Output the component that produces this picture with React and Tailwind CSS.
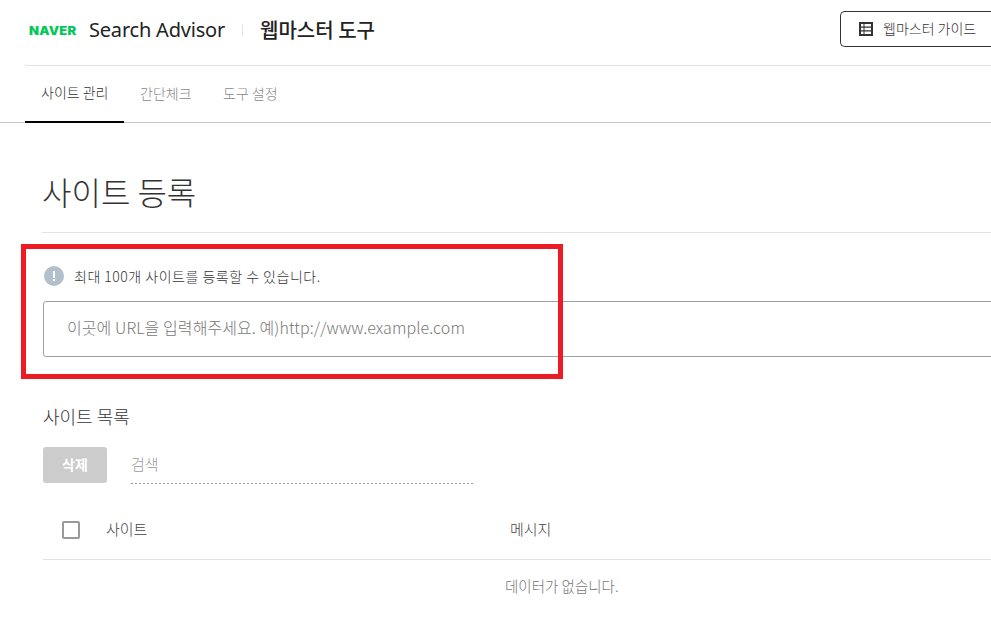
import { useState } from 'react'

const FONT = "font-['Noto_Sans_CJK_KR','Noto_Sans',sans-serif]"

const TABS = [
  { label: '사이트 관리', active: true, width: 'w-[99px]' },
  { label: '간단체크', active: false, width: 'w-[83px]' },
  { label: '도구 설정', active: false, width: 'w-[87px]' },
]

function GuideIcon() {
  return (
    <svg width="14" height="14" viewBox="0 0 14 14" className="shrink-0">
      <path fill="#333" fillRule="evenodd" d="M0 0h14v14H0zM2 2v2.5h2.5V2zm3.5 0v2.5H12V2zM2 5.75v2.5h2.5v-2.5zm3.5 0v2.5H12v-2.5zM2 9.5V12h2.5V9.5zm3.5 0V12H12V9.5z" />
    </svg>
  )
}

function InfoIcon() {
  return (
    <svg width="20" height="20" viewBox="0 0 20 20" className="shrink-0">
      <circle cx="10" cy="10" r="10" fill="#b1c0ca" />
      <rect x="9" y="5" width="2" height="7" fill="#fff" />
      <rect x="9" y="13" width="2" height="2" fill="#fff" />
    </svg>
  )
}

function Header() {
  return (
    <header className="ml-[25px] h-[66px] border-b border-[#e2e2e2] flex items-center pl-[4px] pb-[6px]">
      <span className="w-[48px] font-['Inter',sans-serif] font-black text-[11.5px] tracking-[0.2px] text-[#03c75a] mt-[4px] leading-none whitespace-nowrap origin-left scale-x-[1.13]">NAVER</span>
      <span className="ml-[12px] font-['Noto_Sans',sans-serif] text-[20px] tracking-[-0.2px] leading-none text-[#222]">Search Advisor</span>
      <span className="ml-[17px] w-px h-[12px] bg-[#e5e5e5]" />
      <span className={`ml-[17px] text-[20px] font-medium leading-none text-[#222] ${FONT}`}>웹마스터 도구</span>
      <button className="ml-auto mb-[2px] w-[151px] h-[36px] rounded-l-[5px] border border-r-0 border-[#333] flex items-center pl-[18px] gap-[10px] bg-white">
        <GuideIcon />
        <span className="text-[14px] font-light text-[#333] whitespace-nowrap">웹마스터 가이드</span>
      </button>
    </header>
  )
}

function Tabs() {
  return (
    <nav className="h-[57px] border-b border-[#c8c8c8] pl-[25px] flex">
      {TABS.map(tab => (
        <div
          key={tab.label}
          className={`${tab.width} h-[57px] flex items-center pl-[16px] pb-[3px] text-[14px] font-light ${tab.active ? 'text-[#333] border-b-2 border-black' : 'text-[#888]'}`}
        >
          {tab.label}
        </div>
      ))}
    </nav>
  )
}

export default function App() {
  const [url, setUrl] = useState('')
  const [query, setQuery] = useState('')

  return (
    <div className={`relative w-[991px] h-[631px] overflow-hidden bg-white ${FONT}`}>
      <Header />
      <Tabs />

      <main className="pl-[42px] w-[1100px]">
        <h1 className="h-[110px] border-b border-[#e2e2e2] flex items-center pt-[27px] text-[32px] font-light leading-none text-[#333]">사이트 등록</h1>

        <div className="mt-[33px] ml-[2px] flex items-center gap-[10px] h-[20px]">
          <InfoIcon />
          <p className="text-[14px] font-light tracking-[0.5px] text-[#333]">최대 100개 사이트를 등록할 수 있습니다.</p>
        </div>

        <input
          value={url}
          onChange={e => setUrl(e.target.value)}
          placeholder="이곳에 URL을 입력해주세요. 예)http://www.example.com"
          className="mt-[15px] ml-px block w-full h-[56px] rounded-[3px] border border-[#a0a0a0] pl-[23px] pb-[5px] text-[16px] tracking-[0.08px] font-light text-[#333] placeholder:text-[#777] outline-none"
        />

        <h2 className="mt-[47px] ml-px text-[18px] font-light leading-[24px] text-[#333]">사이트 목록</h2>

        <div className="mt-[19px] ml-px flex items-start">
          <button className="w-[64px] h-[36px] pb-[2px] rounded-[3px] bg-[#cccccc] text-[14px] font-bold text-white">삭제</button>
          <input
            value={query}
            onChange={e => setQuery(e.target.value)}
            placeholder="검색"
            className="ml-[24px] w-[343px] h-[37px] pb-[4px] text-[15px] font-light placeholder:text-[#999] outline-none bg-[repeating-linear-gradient(90deg,#999_0,#999_2px,transparent_2px,transparent_4px)] bg-[length:100%_1px] bg-bottom bg-no-repeat"
          />
        </div>

        <div className="mt-[20px] ml-px h-[56px] border-b border-[#e2e2e2] flex items-center pb-[4px]">
          <span className="ml-[19px] w-[18px] h-[18px] rounded-[2px] border-2 border-[#999]" />
          <span className="ml-[26px] w-[404px] text-[15px] font-light text-[#444]">사이트</span>
          <span className="text-[15px] font-light text-[#444]">메시지</span>
        </div>

        <p className="ml-px pl-[462px] mt-[15px] text-[14.5px] font-light whitespace-nowrap text-[#777]">데이터가 없습니다.</p>
      </main>

      {/* annotation box drawn over the form */}
      <div className="absolute left-[21px] top-[244px] w-[542px] h-[135px] border-[5px] border-[#ed1c24] pointer-events-none" />
    </div>
  )
}
